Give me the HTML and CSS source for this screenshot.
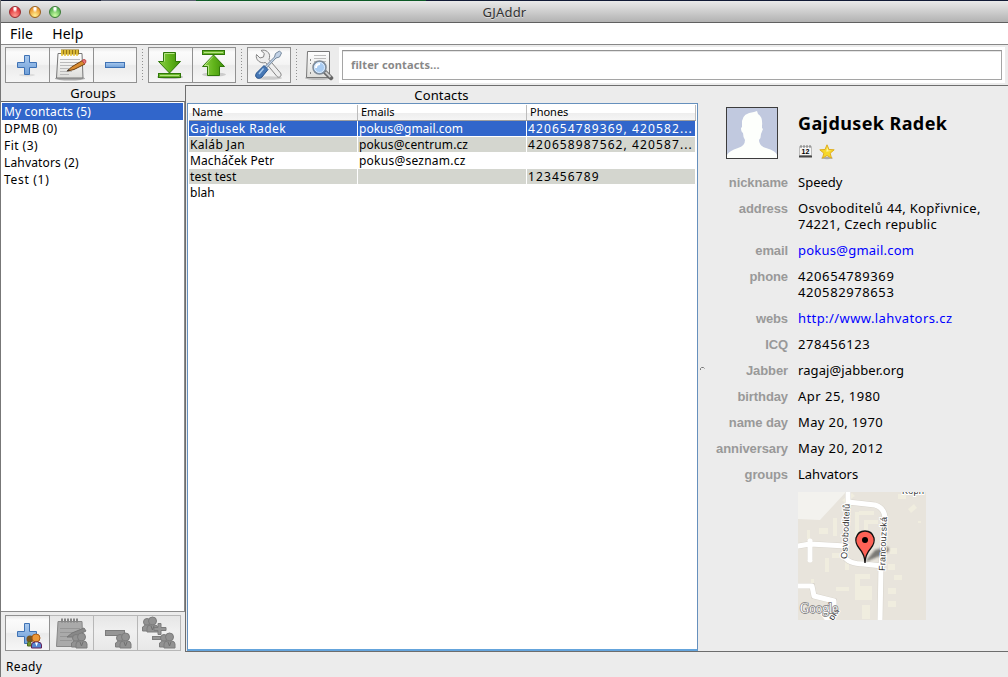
FILE: index.html
```html
<!DOCTYPE html>
<html lang="en">
<head>
<meta charset="utf-8">
<title>GJAddr</title>
<link rel="stylesheet" href="styles.css">
</head>
<body>
<svg class="defs" width="0" height="0">
  <defs>
    <linearGradient id="blue" x1="0" y1="0" x2="0" y2="1"><stop offset="0" stop-color="#a9c9ee"/><stop offset="1" stop-color="#6f9fd8"/></linearGradient>
    <linearGradient id="green" x1="0" y1="0" x2="1" y2="0"><stop offset="0" stop-color="#8fd04a"/><stop offset=".5" stop-color="#62b51c"/><stop offset="1" stop-color="#3f8f08"/></linearGradient>
    <linearGradient id="paper" x1="0" y1="0" x2="0" y2="1"><stop offset="0" stop-color="#fff"/><stop offset="1" stop-color="#dededb"/></linearGradient>
    <g id="people-gray" fill="#929292" stroke="#7c7c7c"><circle cx="5" cy="6" r="3.5"/><path d="M.5 15v-4l3-2h4l2 6z"/><circle cx="10.500" cy="5" r="4"/><path d="M5 16v-4q0-3 4-3h3q4 0 4 3v4z"/><path d="M9 10l1.500 4 1.500-4" fill="none" stroke="#707070"/></g>
  </defs>
</svg>
<div class="window">
  <div class="backdrop"></div>
  <header class="titlebar">
    <span class="lights"><i class="light red"></i><i class="light amber"></i><i class="light green"></i></span>
    <span class="title">GJAddr</span>
  </header>
  <nav class="menubar"><span class="file">File</span><span class="help">Help</span></nav>
  <div class="toolbar">
    <div class="btns">
      <button class="btn"><svg width="30" height="30"><ellipse cx="15" cy="25" rx="8" ry="1.500" fill="#ddd"/><path d="M12.500 8.500h5v7h7v5h-7v7h-5v-7h-7v-5h7z" transform="translate(0 -3)" fill="url(#blue)" stroke="#3f72b4"/></svg></button>
      <button class="btn"><svg width="34" height="32"><ellipse cx="16" cy="29.500" rx="15" ry="2" fill="#aaa"/><path d="M4 4.500h24l1 24.500H2.500z" fill="url(#paper)" stroke="#777"/><path d="M6 10.500h20M6 13.500h20M6 16.500h19M6 19.500h17M6 22.500h12M6 25.500h9" stroke="#bbb"/><path d="M7 3h18" stroke="#947615" stroke-width="5"/><path d="M8 1v6M11 1v6M14 1v6M17 1v6M20 1v6M23 1v6" stroke="#eac83b" stroke-width="1.600"/><path d="M17.500 18l11-6.500 2.500 3.500-11 5.500-6.500 1.500z" fill="#d88b31" stroke="#70400f"/><path d="M28 11.500l2-1 1.800.8v2.200l-1.500 1.200z" fill="#e97878" stroke="#b44"/><path d="M12.500 22.500l3-1-1-1.500z" fill="#333"/></svg></button>
      <button class="btn"><svg width="30" height="30"><rect x="5.500" y="12.500" width="19" height="5" fill="url(#blue)" stroke="#3f72b4"/></svg></button>
    </div>
    <i class="sep"></i>
    <div class="btns">
      <button class="btn"><svg width="30" height="32"><ellipse cx="15" cy="28" rx="13" ry="2" fill="#bbb"/><path d="M8.500 3.500h12v9h5L14.500 24 3.500 12.500h5z" fill="url(#green)" stroke="#2f7709"/><path d="M9.500 12.500v-8h10" fill="none" stroke="#b5e384"/><rect x="3.500" y="24.500" width="22" height="4" fill="#69b42a" stroke="#2f7709"/><path d="M5 26.500h19" stroke="#b5e384"/></svg></button>
      <button class="btn"><svg width="30" height="32"><ellipse cx="15" cy="25.500" rx="12" ry="2" fill="#ccc"/><rect x="3.500" y="1.500" width="22" height="4" fill="#69b42a" stroke="#2f7709"/><path d="M5 3.500h19" stroke="#b5e384"/><path d="M8.500 26.500h12v-9h5L14.500 6 3.500 17.500h5z" fill="url(#green)" stroke="#2f7709"/><path d="M9.500 26v-9.500h-4l8.500-9" fill="none" stroke="#b5e384"/></svg></button>
    </div>
    <i class="sep"></i>
    <div class="btns">
      <button class="btn"><svg width="30" height="32"><ellipse cx="15" cy="29" rx="13" ry="1.800" fill="#ccc"/><path d="M2.500 5.500l3.500 3.500 3.500-1 .8-3.500L7 1.500c4.500-1.500 9.500 2 8.500 7l-.5 2L26.500 24c2 3-1.500 5.500-3.500 3.500L11.500 13.500C6.500 15 1 11 2.500 5.500z" fill="#eee" stroke="#858585"/><path d="M11 17.500L20.500 8l1-3.500 4-2.500 2 2-2 4-3.500 1-9.500 10z" fill="#c2d2e6" stroke="#76899d"/><path d="M10 16.500l4 4-6 7.500c-3 3-8.500.5-5.500-4z" fill="#4678b6" stroke="#28548d"/><path d="M9.500 19.500L5 25" stroke="#a7c9ec" stroke-width="1.500"/></svg></button>
    </div>
    <i class="sep"></i>
    <svg class="searchicon" width="30" height="32"><ellipse cx="13" cy="29" rx="13" ry="2" fill="#bbb"/><path d="M2.500 2.500h22v26h-23z" fill="url(#paper)" stroke="#777"/><path d="M5.500 10v2M5.500 14v1M5.500 23v2" stroke="#888"/><path d="M9 6.500h12M9 9.500h12M9 12.500h12M9 15.500h12M9 18.500h10" stroke="#bbb"/><path d="M20 23l6 6" stroke="#666" stroke-width="4.500" stroke-linecap="round"/><path d="M20.500 23l5 5" stroke="#ccc" stroke-width="2"/><circle cx="14.500" cy="18.500" r="6.500" fill="#8ebbea" stroke="#808b97" stroke-width="1.500"/><circle cx="14.500" cy="18.500" r="5" fill="#a9ccf2" stroke="#e3f0ff"/><path d="M11 19q0-4 4-4" fill="none" stroke="#fff" stroke-width="2"/></svg>
    <div class="searchwrap"><div class="search">filter contacts...</div></div>
  </div>
  <main class="main">
    <aside class="groups">
      <h2 class="head">Groups</h2>
      <ul class="list">
        <li class="sel g1">My contacts (5)</li><li class="g2">DPMB (0)</li><li class="g3">Fit (3)</li><li class="g4">Lahvators (2)</li><li class="g5">Test (1)</li>
      </ul>
      <div class="gbtns">
        <button class="btn"><svg width="34" height="34"><path d="M14.500 9.500h5v8h7v5h-7v7h-5v-7h-7v-5h7z" transform="translate(0 -2)" fill="url(#blue)" stroke="#3f72b4"/><circle cx="20" cy="23" r="3.500" fill="#79551f"/><path d="M17.500 30v-3l2-2 3 5z" fill="#73962a" stroke="#4c681d"/><circle cx="26" cy="22" r="4" fill="#eb9738" stroke="#ae5d13"/><path d="M21.500 32v-3q0-3 4-3h2q4 0 4 3v3z" fill="#5585d0" stroke="#672159"/><path d="M25 26.500l1.500 4 1.500-4" fill="#fff"/></svg></button>
        <button class="btn off"><svg width="34" height="34"><path d="M4 5.500h24l1 25H2.500z" fill="#aaa" stroke="#888"/><path d="M6 12.500h20M6 16.500h19M6 20.500h17M6 24.500h12" stroke="#969696"/><path d="M7 4.500h18" stroke="#858585" stroke-width="4" stroke-dasharray="2 1"/><path d="M13 21l5-4 12-5 2 3-12 6z" fill="#888" stroke="#777"/><use href="#people-gray" x="17" y="16"/></svg></button>
        <button class="btn off"><svg width="34" height="34"><rect x="7.500" y="14.500" width="19" height="5" fill="#969696" stroke="#7c7c7c"/><use href="#people-gray" x="17" y="16"/></svg></button>
        <button class="btn off"><svg width="34" height="34"><use href="#people-gray" x="0" y="0"/><path d="M16 7.500h3v4h5v3h-5v4h-3v-4h-4v-3h4z" fill="#969696" stroke="#7c7c7c"/><rect x="10.500" y="20.500" width="11" height="3" fill="#969696" stroke="#7c7c7c"/><use href="#people-gray" x="17" y="16"/></svg></button>
      </div>
    </aside>
    <section class="right">
      <div class="contacts">
        <h2 class="head chead">Contacts</h2>
        <div class="tablebox">
          <div class="row thead"><span>Name</span><span>Emails</span><span>Phones</span></div>
          <div class="row selrow"><span class="n1">Gajdusek Radek</span><span class="e1">pokus@gmail.com</span><span class="num">420654789369, 420582...</span></div>
          <div class="row alt"><span class="n2">Kaláb Jan</span><span class="e2">pokus@centrum.cz</span><span class="num">420658987562, 420587...</span></div>
          <div class="row"><span class="n3">Macháček Petr</span><span class="e3">pokus@seznam.cz</span><span></span></div>
          <div class="row alt"><span class="n4">test test</span><span></span><span class="num">123456789</span></div>
          <div class="row"><span class="n5">blah</span><span></span><span></span></div>
        </div>
      </div>
      <div class="splitter"><svg width="6" height="5"><path d="M.5 4V2.500Q1 1 3.500 1.500l1 1" fill="none" stroke="#777"/></svg></div>
      <article class="details">
        <div class="person">
          <svg class="avatar" width="52" height="52"><rect x=".5" y=".5" width="51" height="51" fill="#c1c9df" stroke="#3c3c3c"/><path d="M1 51v-3q2-4 11-7 7-2 7-8-2-3-2-7-2-1-2-5l1-1V14q1-8 12-9l3-1 1 3q5 3 4 12v2l1 1-2 5q0 4-2 6 0 6 7 8 10 3 11 7v3z" fill="#fdfffc"/></svg>
          <div class="who">
            <h1 class="name">Gajdusek Radek</h1>
            <div class="marks">
              <svg width="15" height="15"><path d="M1.500 2.500h12v9H1.500z" fill="#f5f5f5" stroke="#bbb"/><path d="M3 1v3M6 1v3M9 1v3M12 1v3" stroke="#777"/><path d="M1 11.500h13v2H1z" fill="#444"/><text x="3.500" y="9.500" class="cal">12</text></svg>
              <svg width="16" height="16"><ellipse cx="8" cy="14" rx="6" ry="1.200" fill="#aaa"/><path d="M8 .8l2 4.700 5.200.3-4 3.400 1.300 5L8 11.500l-4.500 2.700 1.300-5-4-3.400L6 5.500z" fill="#f6d829" stroke="#dfad20"/><path d="M8 3l1.300 3.500 3 .3-5 1z" fill="#fff3a0"/></svg>
            </div>
          </div>
        </div>
        <dl class="fields">
          <dt>nickname</dt><dd class="d1">Speedy</dd>
          <dt>address</dt><dd class="d2">Osvoboditelů 44, Kopřivnice,<br>74221, Czech republic</dd>
          <dt>email</dt><dd class="link d3">pokus@gmail.com</dd>
          <dt>phone</dt><dd class="d4">420654789369<br>420582978653</dd>
          <dt>webs</dt><dd class="link d5">http://www.lahvators.cz</dd>
          <dt>ICQ</dt><dd class="d4">278456123</dd>
          <dt>Jabber</dt><dd class="d6">ragaj@jabber.org</dd>
          <dt>birthday</dt><dd class="d7">Apr 25, 1980</dd>
          <dt>name day</dt><dd class="d8">May 20, 1970</dd>
          <dt>anniversary</dt><dd class="d8">May 20, 2012</dd>
          <dt>groups</dt><dd class="d1">Lahvators</dd>
        </dl>
        <svg class="map" width="128" height="128">
          <defs><filter id="soft" x="-30%" y="-30%" width="160%" height="160%"><feGaussianBlur stdDeviation="1.200"/></filter></defs>
          <rect width="128" height="128" fill="#e8e4dc"/>
          <path d="M0 0h48L22 28 0 27z" fill="#f3f2ee"/>
          <g fill="#f0eddf"><path d="M35 26h4v18h-4zM21 36h9v6h-9zM9 38h3v9H9zM44 8l10-7 3 3-10 7zM57 20h4v28h-4zM61 19h15v4H61zM66 28h4v20h-4zM70 28h10v4H70zM27 66h4v14h-4zM34 61h15v5H34zM47 67h4v11h-4zM57 82h15v5H62v7h12v14H57zM64 113h8v14h-8zM92 56h7v6h-7zM90 72h7v6h-7zM96 83h8v5h-8zM90 96h8v6h-8zM90 109h8v6h-8zM100 2h8v5h-8zM110 17l6-5 3 4-6 5zM120 29h3v2h-3zM13 87h3v10h-3zM38 95h13v4H38z"/></g>
          <g fill="none" stroke="#d8d4cc" stroke-width="6"><path d="M50 0v10l27 3q10 3 10 14l-4 47-1 54M50 10l-4 54q4 8 20 8l18 2M0 54l12-2 36 2M12 49v19M0 94h14l2 10 20 5v6"/></g>
          <g fill="none" stroke="#fff" stroke-width="5" stroke-linecap="round" stroke-linejoin="round"><path d="M50 0v10l27 3q10 3 10 14l-4 47-1 54M50 10l-4 54q4 8 20 8l18 2M0 54l12-2 36 2M12 49v19M0 94h14l2 10 20 5v6l-13 4 7 9"/></g>
          <text class="street" transform="translate(49 67) rotate(-87)" textLength="55">Osvoboditelů</text>
          <path d="M67 70l10-12 12-3q6 3-5 8z" fill="#222" opacity=".55" filter="url(#soft)"/>
          <text class="street" transform="translate(87 79) rotate(-88)" textLength="54">Francouzská</text>
          <text class="street" x="104" y="2" textLength="22">Kopři</text>
          <text class="street" transform="translate(35 129) rotate(-57)">pni</text>
          <text class="google" x="2" y="121" textLength="38" lengthAdjust="spacingAndGlyphs">Google</text>
          <path d="M67 71q0-8-6-15-4-5-3-10 2-7 9-7t9 7q1 5-3 10-6 7-6 15z" fill="#fe6256" stroke="#111" stroke-width="1.300"/><circle cx="67" cy="48" r="3" fill="#000"/>
        </svg>
      </article>
    </section>
  </main>
  <footer class="status">Ready</footer>
</div>
</body>
</html>
```
FILE: styles.css
```css
* { box-sizing: border-box; }
body { margin: 0; font: 13px/16px "Noto Sans", sans-serif; color: #000; background: #ececec; overflow: hidden; }
h1, h2, ul, dl, dd { margin: 0; padding: 0; }
ul { list-style: none; }
.defs { position: absolute; }
.window { width: 1008px; height: 677px; display: flex; flex-direction: column; border-left: 1px solid #777; }
.backdrop { height: 1px; background: linear-gradient(90deg, #111a30 0 100px, #5a5f70 100px 195px, #0d5a26 195px 425px, #111a35 425px); }
.titlebar { height: 22px; display: grid; grid-template-columns: 100px 1fr 100px; align-items: center; background: linear-gradient(#eaeaea, #b2b2b2); border-bottom: 1px solid #606060; border-radius: 4px 4px 0 0; }
.lights { display: flex; gap: 8px; padding-left: 8px; }
.light { width: 12px; height: 12px; border-radius: 50%; border: 1px solid #666; }
.red { background: radial-gradient(ellipse at 50% 15%, #fff 0 12%, transparent 35%), radial-gradient(circle at 50% 85%, #ff9b90, #e23b3f 65%); border-color: #982c30; }
.amber { background: radial-gradient(ellipse at 50% 15%, #fff 0 12%, transparent 35%), radial-gradient(circle at 50% 85%, #fff294, #ee9d35 65%); border-color: #9b611c; }
.green { background: radial-gradient(ellipse at 50% 15%, #fff 0 12%, transparent 35%), radial-gradient(circle at 50% 85%, #cdffa3, #5fb758 65%); border-color: #3a7b35; }
.title { text-align: center; color: #333; letter-spacing: .2px; text-shadow: 0 1px #ddd; }
.menubar { height: 22px; background: #fff; border-bottom: 1px solid #878787; display: flex; gap: 18px; padding: 2px 0 0 9px; font-size: 14px; line-height: 18px; letter-spacing: .2px; }
.help { padding-left: 1px; }
.toolbar { height: 40px; padding: 2px 4px 0; display: flex; background: #ececec; }
.btns, .gbtns { display: flex; }
.btn { width: 45px; height: 36px; margin-right: -1px; padding: 0 2px 0 0; border: 1px solid #919191; background: linear-gradient(#e9e9e9, #fbfbfb 12%, #f4f4f4 48%, #ebebeb 52%, #f6f6f6); display: flex; align-items: center; justify-content: center; }
.btn:last-child { margin-right: 0; width: 44px; padding-right: 1px; }
.sep { width: 1px; height: 32px; margin: 2px 5px; background: repeating-linear-gradient(#909090 0 1px, transparent 1px 3px); }
.searchicon { margin: 2px 4px 0 3px; }
.searchwrap { flex: 1; height: 36px; margin-right: -1px; padding: 3px; background: #fff; }
.search { height: 30px; border: 1px solid #a5a5a5; border-top-color: #929292; box-shadow: inset 0 1px #e5e5e5; padding: 6px 8px; color: #888; font-size: 11px; font-weight: bold; line-height: 16px; letter-spacing: .14px; }
.main { height: 567px; display: flex; }
.groups { width: 184px; display: flex; flex-direction: column; }
.head { height: 16px; font-weight: normal; font-size: 13px; line-height: 17px; text-align: center; letter-spacing: .15px; }
.list { height: 511px; border: solid #8c8c8c; border-width: 1px 1px 1px 0; border-top-color: #666; background: #fff; padding: 1px 1px 0; }
.list li { height: 17px; line-height: 17px; padding-left: 2px; font-size: 12px; }
.list .sel { background: #3166cb; color: #fff; }
.g1, .g2, .g4 { letter-spacing: .16px; }
.g3 { letter-spacing: .45px; }
.g5 { letter-spacing: .7px; }
.gbtns { padding: 3px 4px 0; }
.off { border-color: #b7b7b7; background: linear-gradient(#e6e6e6, #f0f0f0 45%, #e8e8e8); }
.gbtns .btn:first-child { border-color: #919191; position: relative; }
.right { flex: 1; display: flex; border: solid #6d6d6d; border-width: 1px 0 1px 1px; }
.contacts { width: 512px; padding-left: 1px; display: flex; flex-direction: column; }
.chead { height: 17px; line-height: 18px; padding-right: 2px; }
.tablebox { flex: 1; border: 1px solid #6690bd; border-bottom: 2px solid #64a4dc; background: #fff; padding: 1px 1px 0; }
.row { height: 16px; display: grid; grid-template-columns: 168px 168px 168px; column-gap: 1px; border-bottom: 1px solid #fff; font-size: 12px; line-height: 15px; }
.row span { padding-left: 1px; white-space: nowrap; overflow: hidden; }
.n1 { letter-spacing: .42px; }
.n2 { letter-spacing: .35px; }
.n3, .n4, .e2 { letter-spacing: .1px; }
.e3 { letter-spacing: .24px; }
.num { letter-spacing: 1.1px; }
.alt span { background: #d4d6cf; }
.selrow span { background: #3166cb; color: #fff; }
.thead { font-size: 11px; line-height: 14px; background: linear-gradient(#fff 50%, #ededed 50%, #f5f5f5); border-bottom: 1px solid #9f9f9f; }
.thead span { padding-left: 3px; border-right: 1px solid #bcbcbc; margin-right: -1px; }
.splitter { width: 8px; display: flex; align-items: center; padding-left: 2px; }
.details { flex: 1; padding: 21px 0 0 7px; }
.person { display: flex; gap: 20px; padding-left: 13px; height: 67px; }
.name { font-size: 18px; line-height: 24px; padding-top: 4px; letter-spacing: .4px; white-space: nowrap; }
.marks { display: flex; gap: 6px; padding-top: 9px; }
.cal { font: bold 7px "Liberation Sans", sans-serif; }
.fields { display: grid; grid-template-columns: 75px 1fr; column-gap: 10px; row-gap: 10px; }
.fields dt { display: flex; justify-content: flex-end; color: #999; font: bold 13px/17px "Liberation Sans", sans-serif; letter-spacing: -.1px; height: 16px; white-space: nowrap; }
.fields dd { white-space: nowrap; }
.d2 { letter-spacing: .3px; }
.d3 { letter-spacing: .24px; }
.d4 { letter-spacing: .6px; }
.d5 { letter-spacing: .42px; }
.d6 { letter-spacing: .1px; }
.d7 { letter-spacing: .5px; }
.d8 { letter-spacing: .37px; }
.link { color: #00f; }
.map { display: block; margin: 10px 0 0 85px; }
.street { font: 9px "Liberation Sans", sans-serif; fill: #333; stroke: #fff; stroke-width: 2px; paint-order: stroke; }
.google { font: 15px "Liberation Serif", serif; fill: #fff; stroke: #777; stroke-width: 1.500px; paint-order: stroke; }
.status { height: 25px; line-height: 29px; padding-left: 5px; font-size: 12px; letter-spacing: .35px; }
```
